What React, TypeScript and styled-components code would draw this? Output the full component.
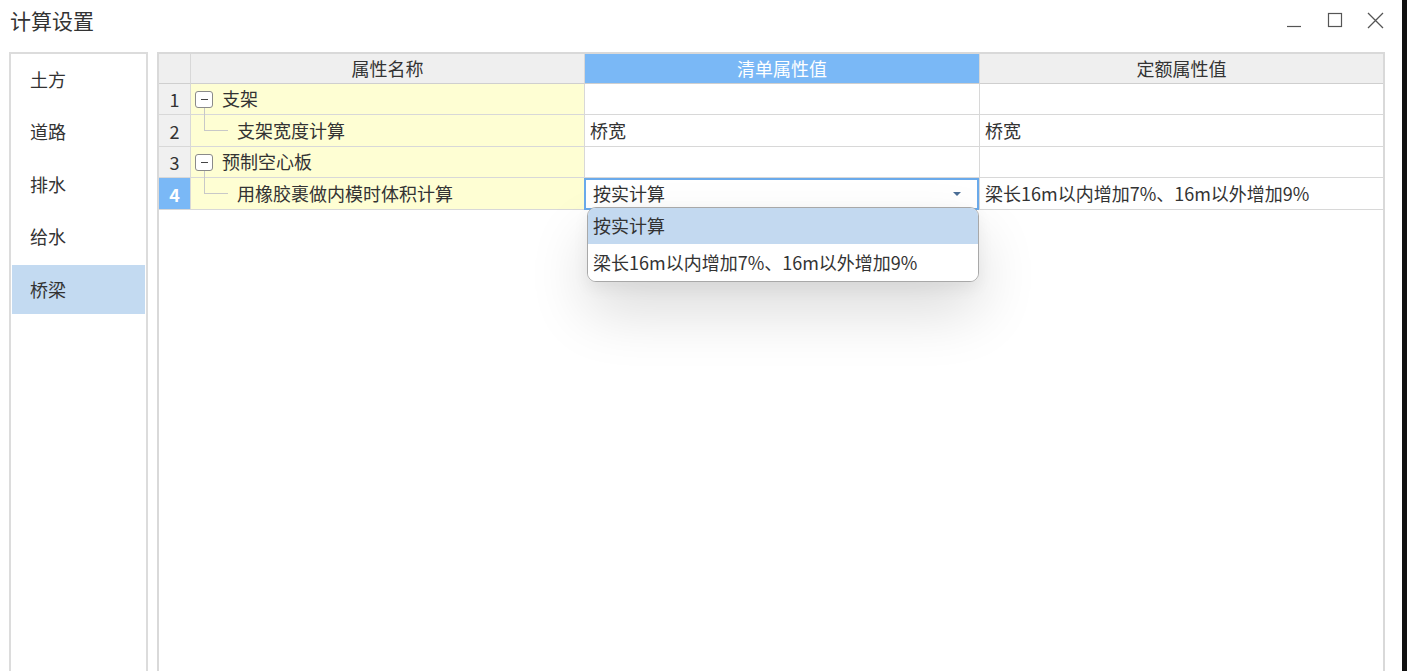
import React from "react";
import styled, { createGlobalStyle } from "styled-components";

const Global = createGlobalStyle`
  html, body { margin: 0; padding: 0; background: #fff; }
  body { font-family: "Noto Sans CJK SC", "Noto Sans", sans-serif; color: #333; }
  * { box-sizing: border-box; }
`;

const Page = styled.div`
  display: flex;
  width: 1407px;
  height: 671px;
  overflow: hidden;
`;

const Window = styled.div`
  flex: 1;
  display: flex;
  flex-direction: column;
  background: #fff;
  min-width: 0;
`;

const Edge = styled.div`
  width: 5px;
  background: #111;
`;

const TitleBar = styled.div`
  height: 44px;
  display: flex;
  align-items: center;
  padding: 0 18px 0 10px;
`;

const Title = styled.div`
  font-size: 21px;
  color: #333;
  flex: 1;
  margin-top: -4px;
`;

const Controls = styled.div`
  display: flex;
  align-items: center;
  gap: 24px;
  margin-top: -4px;
`;

const CtrlBtn = styled.div`
  width: 17px;
  height: 17px;
  display: flex;
  align-items: center;
  justify-content: center;
`;

const Body = styled.div`
  flex: 1;
  display: flex;
  gap: 9px;
  padding: 8px 17px 0 9px;
  min-height: 0;
`;

const SideNav = styled.div`
  width: 139px;
  border: 2px solid #dcdcdc;
  border-bottom: none;
  padding: 1px 1px 0 1px;
  display: flex;
  flex-direction: column;
  gap: 3.5px;
`;

const NavItem = styled.div<{ $active?: boolean }>`
  height: 49px;
  display: flex;
  align-items: center;
  padding-left: 18px;
  padding-bottom: 2px;
  font-size: 18px;
  color: #333;
  background: ${(p) => (p.$active ? "#c3daf1" : "transparent")};
`;

const TablePanel = styled.div`
  flex: 1;
  border: 2px solid #d9d9d9;
  border-bottom: none;
  min-width: 0;
`;

const Grid = styled.div`
  display: grid;
  grid-template-columns: 32px 394px 395px 1fr;
  grid-template-rows: 30px 31px 32px 31px 32px;
`;

const Cell = styled.div<{ $bg?: string }>`
  position: relative;
  border-right: 1px solid #d8d8d8;
  border-bottom: 1px solid #d8d8d8;
  display: flex;
  align-items: center;
  font-size: 18px;
  color: #333;
  background: ${(p) => p.$bg || "#fff"};
  padding-left: 5px;
  padding-bottom: 2px;
  white-space: nowrap;
  &:nth-child(4n) { border-right: none; }
`;

const HeadCell = styled(Cell)<{ $active?: boolean }>`
  justify-content: center;
  padding-left: 0;
  background: ${(p) => (p.$active ? "#7ab8f6" : "#efefef")};
  color: ${(p) => (p.$active ? "#fff" : "#333")};
  border-bottom: 1px solid #cfcfcf;
`;

const NumCell = styled(Cell)<{ $active?: boolean }>`
  justify-content: center;
  padding-left: 0;
  padding-bottom: 0;
  background: ${(p) => (p.$active ? "#7ab8f6" : "#f0f0f0")};
  color: ${(p) => (p.$active ? "#fff" : "#333")};
  font-weight: ${(p) => (p.$active ? 700 : 400)};
`;

const NameCell = styled(Cell)<{ $child?: boolean }>`
  background: #fefed3;
  padding-left: ${(p) => (p.$child ? "46px" : "4px")};
`;

const Toggle = styled.span`
  width: 18px;
  height: 17px;
  border: 1px solid #8a8a8a;
  border-radius: 3px;
  display: inline-flex;
  align-items: center;
  justify-content: center;
  margin-right: 9px;
  margin-top: 2px;
  background: #fff;
  &::after {
    content: "";
    width: 7px;
    height: 1px;
    background: #444;
  }
`;

const TreeLine = styled.span`
  position: absolute;
  left: 13px;
  top: -7px;
  width: 24px;
  height: 23px;
  border-left: 1px solid #c8c8c8;
  border-bottom: 1px solid #c8c8c8;
`;

const Editor = styled.div`
  position: absolute;
  inset: 0 0 -1px -1px;
  border: 2px solid #6aaaeb;
  display: flex;
  align-items: center;
  padding-left: 7px;
  padding-right: 16px;
  padding-bottom: 2px;
  background: #fff;
  font-size: 18px;
  color: #333;
`;

const EditorText = styled.span`
  flex: 1;
`;

const Caret = styled.span`
  width: 0;
  height: 0;
  margin-top: 2px;
  border-left: 4px solid transparent;
  border-right: 4px solid transparent;
  border-top: 4px solid #4b6e96;
`;

const Popup = styled.div`
  position: absolute;
  left: 2px;
  top: calc(100% - 2px);
  width: 392px;
  background: #fff;
  border: 1px solid #a8a8a8;
  border-radius: 9px;
  overflow: hidden;
  box-shadow: 0 30px 60px rgba(0, 0, 0, 0.14), 0 6px 16px rgba(0, 0, 0, 0.06);
  z-index: 10;
`;

const PopupItem = styled.div<{ $active?: boolean; $h: number }>`
  height: ${(p) => p.$h}px;
  display: flex;
  align-items: center;
  padding-left: 5px;
  padding-bottom: 2px;
  font-size: 18px;
  color: #333;
  background: ${(p) => (p.$active ? "#c3d9f0" : "#fff")};
`;

export default function App() {
  return (
    <>
      <Global />
      <Page>
        <Window>
          <TitleBar>
            <Title>计算设置</Title>
            <Controls>
              <CtrlBtn>
                <svg width="16" height="16" viewBox="0 0 16 16">
                  <line x1="1" y1="14.5" x2="15" y2="14.5" stroke="#555" strokeWidth="1.2" />
                </svg>
              </CtrlBtn>
              <CtrlBtn>
                <svg width="16" height="16" viewBox="0 0 16 16">
                  <rect x="1.5" y="1.5" width="13" height="13" fill="none" stroke="#555" strokeWidth="1.2" />
                </svg>
              </CtrlBtn>
              <CtrlBtn>
                <svg width="17" height="17" viewBox="0 0 17 17">
                  <path d="M1 1 L16 16 M16 1 L1 16" stroke="#555" strokeWidth="1.3" />
                </svg>
              </CtrlBtn>
            </Controls>
          </TitleBar>
          <Body>
            <SideNav>
              <NavItem>土方</NavItem>
              <NavItem>道路</NavItem>
              <NavItem>排水</NavItem>
              <NavItem>给水</NavItem>
              <NavItem $active>桥梁</NavItem>
            </SideNav>
            <TablePanel>
              <Grid>
                <HeadCell />
                <HeadCell>属性名称</HeadCell>
                <HeadCell $active>清单属性值</HeadCell>
                <HeadCell>定额属性值</HeadCell>

                <NumCell>1</NumCell>
                <NameCell>
                  <Toggle />
                  支架
                </NameCell>
                <Cell />
                <Cell />

                <NumCell>2</NumCell>
                <NameCell $child>
                  <TreeLine />
                  支架宽度计算
                </NameCell>
                <Cell>桥宽</Cell>
                <Cell>桥宽</Cell>

                <NumCell>3</NumCell>
                <NameCell>
                  <Toggle />
                  预制空心板
                </NameCell>
                <Cell />
                <Cell />

                <NumCell $active>4</NumCell>
                <NameCell $child>
                  <TreeLine />
                  用橡胶裹做内模时体积计算
                </NameCell>
                <Cell>
                  <Editor>
                    <EditorText>按实计算</EditorText>
                    <Caret />
                  </Editor>
                  <Popup>
                    <PopupItem $active $h={36}>按实计算</PopupItem>
                    <PopupItem $h={37}>梁长16m以内增加7%、16m以外增加9%</PopupItem>
                  </Popup>
                </Cell>
                <Cell>梁长16m以内增加7%、16m以外增加9%</Cell>
              </Grid>
            </TablePanel>
          </Body>
        </Window>
        <Edge />
      </Page>
    </>
  );
}
